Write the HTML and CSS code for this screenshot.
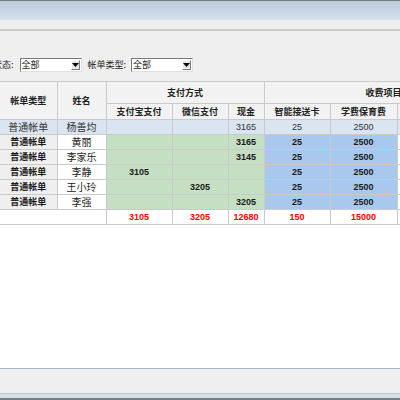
FILE: index.html
```html
<!DOCTYPE html>
<html>
<head>
<meta charset="utf-8">
<link rel="stylesheet" href="styles.css">
</head>
<body>
<div class="window">
  <div class="titlebar"></div>
  <div class="menubar"></div>
  <div class="filters">
    <span class="label lead">状态:</span>
    <div class="select">
      <span class="value">全部</span>
      <span class="arrow"><svg width="7" height="4" viewBox="0 0 7 4"><path d="M0 0h7L3.5 4z" fill="#000"/></svg></span>
    </div>
    <span class="label">帐单类型:</span>
    <div class="select">
      <span class="value">全部</span>
      <span class="arrow"><svg width="7" height="4" viewBox="0 0 7 4"><path d="M0 0h7L3.5 4z" fill="#000"/></svg></span>
    </div>
  </div>
  <div class="grid">
    <table>
      <colgroup>
        <col class="c-type"><col class="c-name"><col class="c-ali"><col class="c-wx"><col class="c-cash"><col class="c-card"><col class="c-fee"><col class="c-more">
      </colgroup>
      <thead>
        <tr class="h1">
          <th rowspan="2" class="first">帐单类型</th>
          <th rowspan="2">姓名</th>
          <th colspan="3">支付方式</th>
          <th colspan="3" class="wide">收费项目</th>
        </tr>
        <tr class="h2">
          <th>支付宝支付</th>
          <th>微信支付</th>
          <th>现金</th>
          <th>智能接送卡</th>
          <th>学费保育费</th>
          <th>伙食费</th>
        </tr>
      </thead>
      <tbody>
        <tr class="sel">
          <td class="first t-big">普通帐单</td>
          <td class="t-big">杨善均</td>
          <td></td><td></td><td class="num">3165</td>
          <td class="num">25</td><td class="num">2500</td><td></td>
        </tr>
        <tr>
          <td class="first type">普通帐单</td><td class="name">黄丽</td>
          <td class="pay"></td><td class="pay"></td><td class="pay num">3165</td>
          <td class="fee num">25</td><td class="fee num">2500</td><td class="more"></td>
        </tr>
        <tr>
          <td class="first type">普通帐单</td><td class="name">李家乐</td>
          <td class="pay"></td><td class="pay"></td><td class="pay num">3145</td>
          <td class="fee num">25</td><td class="fee num">2500</td><td class="more"></td>
        </tr>
        <tr>
          <td class="first type">普通帐单</td><td class="name">李静</td>
          <td class="pay num">3105</td><td class="pay"></td><td class="pay"></td>
          <td class="fee num">25</td><td class="fee num">2500</td><td class="more"></td>
        </tr>
        <tr>
          <td class="first type">普通帐单</td><td class="name">王小玲</td>
          <td class="pay"></td><td class="pay num">3205</td><td class="pay"></td>
          <td class="fee num">25</td><td class="fee num">2500</td><td class="more"></td>
        </tr>
        <tr>
          <td class="first type">普通帐单</td><td class="name">李强</td>
          <td class="pay"></td><td class="pay"></td><td class="pay num">3205</td>
          <td class="fee num">25</td><td class="fee num">2500</td><td class="more"></td>
        </tr>
        <tr class="total">
          <td colspan="2" class="first"></td>
          <td>3105</td><td>3205</td><td>12680</td>
          <td>150</td><td>15000</td><td></td>
        </tr>
      </tbody>
    </table>
  </div>
  <div class="statusbar"></div>
  <div class="bottomband"></div>
</div>
</body>
</html>
```
FILE: styles.css
```css
html, body {
  margin: 0;
  padding: 0;
  background: #efefef;
}
.window {
  width: 400px;
  height: 400px;
  overflow: hidden;
  display: flex;
  flex-direction: column;
  background: #efefef;
  font-family: "Noto Sans CJK SC", sans-serif;
}
.titlebar {
  height: 19px;
  flex: none;
  border-top: 1px solid #7b7b7b;
  background: linear-gradient(#bccada, #d4e0ee);
}
.menubar {
  height: 9px;
  flex: none;
  background: #efefef;
  border-bottom: 2px solid #cbcbcb;
}
.filters {
  height: 15px;
  flex: none;
  padding: 26px 0 9px 0;
  display: flex;
  align-items: center;
  gap: 0;
  font-size: 9px;
  color: #222;
  white-space: nowrap;
}
.label {
  line-height: 14px;
}
.lead {
  margin-left: -7px;
  margin-right: 6px;
}
.select {
  width: 60px;
  height: 12px;
  border: 1px solid;
  border-color: #7a7a7a #e0e0e0 #e0e0e0 #7a7a7a;
  background: #fff;
  display: flex;
  align-items: center;
  justify-content: space-between;
  margin-right: 6px;
}
.select + .label {
  margin-right: 5px;
}
.value {
  padding-left: 1px;
  font-size: 9px;
  line-height: 12px;
}
.arrow {
  width: 9px;
  height: 10px;
  margin-right: 1px;
  background: #e6e6e6;
  border: 1px solid;
  border-color: #fff #7a7a7a #7a7a7a #fff;
  box-sizing: border-box;
  display: flex;
  align-items: center;
  justify-content: center;
}
.grid {
  flex: 1;
  background: #fff;
  overflow: hidden;
}
table {
  border-collapse: collapse;
  table-layout: fixed;
  width: 502px;
}
.c-type { width: 57px; }
.c-name { width: 49px; }
.c-ali { width: 66px; }
.c-wx { width: 56px; }
.c-cash { width: 36px; }
.c-card { width: 66px; }
.c-fee { width: 67px; }
.c-more { width: 105px; }
th, td {
  border: 1px solid #cacaca;
  padding: 0;
  text-align: center;
  white-space: nowrap;
  overflow: hidden;
}
.first {
  border-left: none;
}
th {
  background: #f2f2f2;
  font-weight: bold;
  font-size: 9px;
  line-height: 11px;
  color: #222;
}
.h1 {
  height: 22px;
}
.h2 {
  height: 16px;
}
.wide {
  text-align: left;
  padding-left: 101px;
}
tbody tr {
  height: 15px;
}
td {
  font-size: 9px;
  line-height: 12px;
  color: #1a1a1a;
  font-family: "Liberation Sans", "Noto Sans CJK SC", sans-serif;
}
.sel td {
  background: #dbe5f1;
  color: #333;
}
.t-big {
  font-family: "Noto Sans CJK SC", sans-serif;
  font-size: 10px;
}
.type {
  background: #efefef;
  font-weight: bold;
  font-family: "Noto Sans CJK SC", sans-serif;
  font-size: 9px;
}
.name {
  background: #fff;
  font-family: "Noto Sans CJK SC", sans-serif;
  font-size: 10px;
  color: #222;
}
.pay {
  background: #c5dfc2;
}
.fee {
  background: #a9c8ee;
}
.more {
  background: #fff;
}
tbody tr:not(.sel) .num {
  font-weight: bold;
}
.total td {
  background: #fff;
  color: #ff0000;
  font-weight: bold;
}
.statusbar {
  height: 24px;
  flex: none;
  border-top: 1px solid #a3b5cb;
  border-bottom: 1px solid #c8c8c8;
  background: #efefef;
}
.bottomband {
  height: 4px;
  flex: none;
  background: #d5e0ed;
  border-bottom: 2px solid #7b7b7b;
}
```
